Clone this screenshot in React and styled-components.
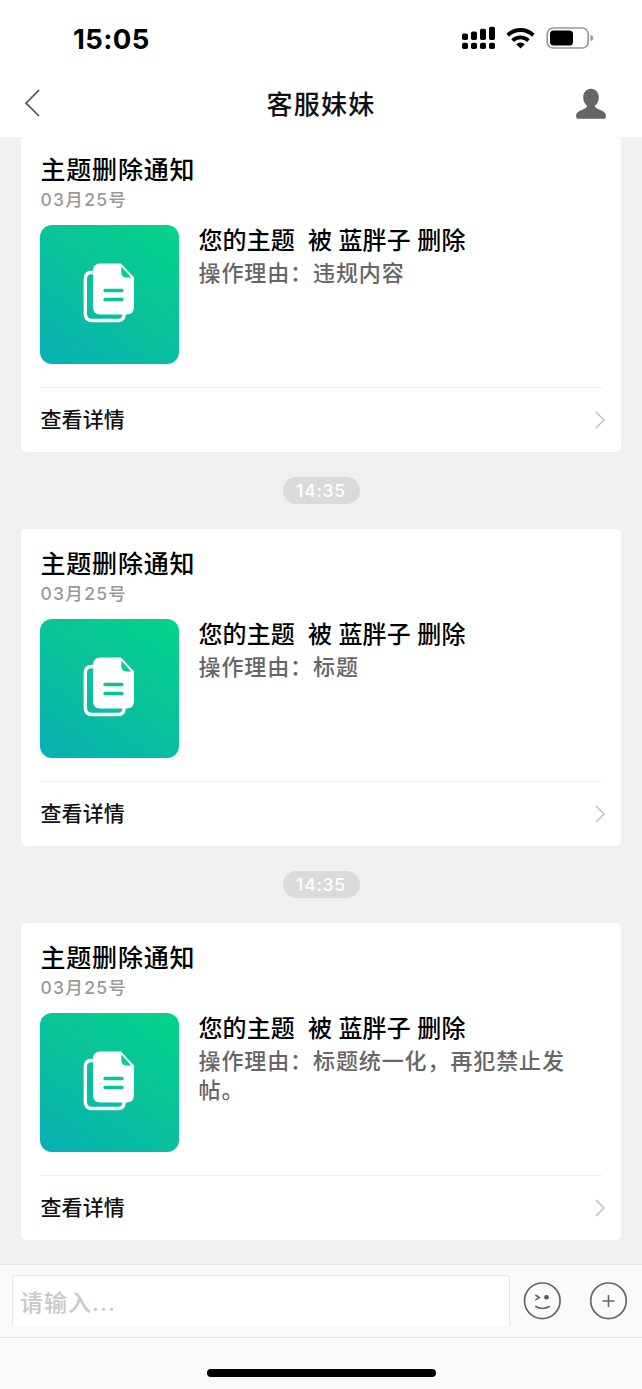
import React from "react"
import styled, { createGlobalStyle } from "styled-components"

const colors = {
  page: "#f0f0f0",
  bar: "#fafafa",
  line: "#e6e6e6",
  text: "#111",
  muted: "#999",
  icon: "#666",
}

const GlobalStyle = createGlobalStyle`
  * {
    box-sizing: border-box;
  }
  body {
    margin: 0;
    background-color: ${colors.page};
    color: ${colors.text};
    font-family: Inter, "Noto Sans CJK SC", sans-serif;
  }
`

const Screen = styled.div`
  display: flex;
  flex-direction: column;
  width: 642px;
  height: 1389px;
  overflow: hidden;
`

const Top = styled.header`
  flex: none;
  height: 137px;
  background-color: #fff;
  z-index: 1;
`

const StatusBar = styled.div`
  display: flex;
  align-items: center;
  justify-content: space-between;
  height: 76px;
  padding: 0 48px 0 73px;
`

const Clock = styled.span`
  font-size: 27.5px;
  font-weight: 700;
  letter-spacing: 0.4px;
  line-height: 32px;
  padding-top: 1px;
  color: #000;
`

const StatusIcons = styled.svg`
  display: block;
  width: 134px;
  height: 28px;
`

const NavBar = styled.div`
  display: grid;
  grid-template-columns: 60px 1fr 60px;
  align-items: center;
  height: 55px;
  padding: 0 22px;

  svg {
    display: block;
  }
  svg:last-child {
    justify-self: end;
    margin-right: 13px;
  }
`

const NavTitle = styled.h1`
  margin: 0;
  padding-top: 2px;
  text-align: center;
  font-size: 26px;
  font-weight: 500;
  letter-spacing: 1.3px;
  line-height: 36px;
`

const Messages = styled.main`
  flex: 1;
  display: flex;
  flex-direction: column;
  align-items: center;
  min-height: 0;
  margin-top: -2px;
`

const Card = styled.article`
  flex: none;
  width: 600px;
  height: 317px;
  padding: 17px 19px 0 18.5px;
  border-radius: 5px;
  background-color: #fff;
`

const CardTitle = styled.h2`
  margin: 0 0 0 1px;
  font-size: 25px;
  font-weight: 500;
  letter-spacing: 0.8px;
  line-height: 36px;
  color: #000;
`

const CardDate = styled.time`
  display: block;
  margin-left: 1px;
  font-size: 17.5px;
  font-weight: 500;
  letter-spacing: 1.3px;
  line-height: 24px;
  color: ${colors.muted};
`

const CardBody = styled.div`
  display: flex;
  height: 175px;
  padding-top: 12.5px;
`

const Thumb = styled.div`
  display: flex;
  flex: none;
  align-items: center;
  justify-content: center;
  width: 139.5px;
  height: 139.5px;
  margin-right: 19.5px;
  padding-bottom: 3px;
  border-radius: 12px;
  background-image: linear-gradient(35deg, #08b0b4 0%, #09c19b 50%, #06d389 100%);
`

const CardText = styled.div`
  flex: 1;
  min-width: 0;
`

const Summary = styled.p`
  margin: 0;
  font-size: 24px;
  font-weight: 500;
  letter-spacing: 0.1px;
  line-height: 32px;
  white-space: pre;
  color: #000;
`

const Reason = styled.p`
  margin: 2px 0 0;
  font-size: 22px;
  font-weight: 500;
  letter-spacing: 0.9px;
  line-height: 29px;
  color: ${colors.icon};
`

const Details = styled.div`
  display: flex;
  align-items: center;
  justify-content: space-between;
  height: 65px;
  padding-left: 1px;
  border-top: 1px solid #f0f0f0;
  font-size: 21px;
  font-weight: 500;
  letter-spacing: 0.1px;
  line-height: 30px;

  span {
    padding-bottom: 1px;
  }
  svg {
    margin-right: -4px;
  }
`

const TimeBadge = styled.div`
  flex: none;
  width: 77px;
  height: 27px;
  margin: 25px 0;
  border-radius: 14px;
  background-color: #dadada;
  color: #fff;
  font-size: 17.5px;
  font-weight: 500;
  letter-spacing: 0.8px;
  line-height: 27px;
  text-align: center;
`

const Composer = styled.footer`
  flex: none;
  display: flex;
  align-items: center;
  height: 74px;
  padding: 0 14px 0 12px;
  border-top: 1px solid ${colors.line};
  border-bottom: 1px solid ${colors.line};
  background-color: ${colors.bar};

  svg {
    display: block;
    flex: none;
  }
`

const Input = styled.input`
  width: 498px;
  height: 52px;
  margin-right: 13px;
  padding: 3px 7px 0;
  border: 1px solid ${colors.line};
  border-bottom-color: #fbfbfb;
  border-radius: 4px 4px 0 0;
  background-color: #fff;
  font-family: inherit;
  font-size: 23px;
  font-weight: 500;
  letter-spacing: 1px;
  outline: none;

  &::placeholder {
    color: #c8c8c8;
    opacity: 1;
  }
`

const IconGap = styled.span`
  flex: 1;
`

const HomeArea = styled.div`
  flex: none;
  height: 51px;
  padding-top: 31px;
  background-color: ${colors.bar};
`

const HomeBar = styled.div`
  width: 229px;
  height: 8px;
  margin: 0 auto;
  border-radius: 4px;
  background-color: #000;
`

const StatusGlyphs = () => (
  <StatusIcons viewBox="460 24 134 28">
    <rect x="462" y="33.5" width="6" height="6.5" rx="1.8" />
    <rect x="471" y="31.5" width="6" height="8.5" rx="1.8" />
    <rect x="480" y="28.8" width="6" height="11.2" rx="1.8" />
    <rect x="489" y="26.8" width="6" height="13.2" rx="1.8" />
    {[462, 471, 480, 489].map(x => (
      <rect key={x} x={x} y="42.8" width="6" height="6.3" rx="1.8" />
    ))}
    <g fill="none" stroke="#000">
      <path d="M507.7 35.3A18.3 18.3 0 0 1 533.3 35.3" strokeWidth="4" />
      <path d="M512.6 40.6A11.3 11.3 0 0 1 528.4 40.6" strokeWidth="3.8" />
    </g>
    <path d="M520.5 48.5l-4.3-4.3a6.3 6.3 0 0 1 8.6 0z" />
    <rect
      x="547.2"
      y="28"
      width="41"
      height="20"
      rx="6"
      fill="none"
      stroke="#999"
      strokeWidth="1.7"
    />
    <rect x="550" y="30.5" width="23" height="15" rx="3.5" />
    <path d="M590.5 34.8q2.8 1 2.8 3.2t-2.8 3.2z" fill="#999" />
  </StatusIcons>
)

const BackIcon = () => (
  <svg width="20" height="30" viewBox="0 0 20 30">
    <path d="M17 1.2L4 14.2l13 12.8" fill="none" stroke="#555" strokeWidth="1.7" />
  </svg>
)

const UserIcon = () => (
  <svg width="32" height="32" viewBox="0 0 32 32" fill="#666">
    <path d="M16 .8c4.8 0 7.8 3.500 7.800 8.600 0 3.900-1.700 6.500-3.700 8.100 0 1.800.6 2.500 3 3.500 4.300 1.700 7.900 3.400 7.900 7 0 2-1 2.800-2.800 2.800H3.800C2 30.800 1 30 1 28c0-3.600 3.600-5.300 7.900-7 2.400-1 3-1.700 3-3.500-2-1.600-3.700-4.200-3.700-8.100C8.200 4.300 11.200.8 16 .8z" />
  </svg>
)

const DocumentsIcon = () => (
  <svg width="52" height="60" viewBox="0 0 52 60">
    <path
      d="M11 9.500H8.500Q2.300 9.500 2.300 15.700v35q0 6.800 6.800 6.800h26q6 0 6-6.500"
      fill="none"
      stroke="#fff"
      strokeWidth="3.4"
    />
    <path d="M17.500 .5H38l13 14V44q0 7.500-7.500 7.500h-26Q10 51.500 10 44V8Q10 .5 17.500 .5z" fill="#fff" />
    <path d="M38.300 3.500v5.500q0 5.500 5.500 5.500h4.400z" fill="#08ca92" />
    <path
      d="M22 27.500h17M22 36.500h17"
      stroke="#09c49a"
      strokeWidth="3.4"
      strokeLinecap="round"
    />
  </svg>
)

const ArrowIcon = () => (
  <svg width="12" height="20" viewBox="0 0 12 20">
    <path d="M2 2l8 8-8 8" fill="none" stroke="#bbb" strokeWidth="1.3" />
  </svg>
)

const SmileIcon = () => (
  <svg width="38" height="38" viewBox="0 0 38 38" fill="none" stroke="#666">
    <circle cx="19.3" cy="18.8" r="17.8" strokeWidth="1.7" />
    <path d="M12.300 13l4 2.600-4 2.600" strokeWidth="1.6" />
    <circle cx="23.5" cy="15.2" r="2.3" fill="#555" stroke="none" />
    <path d="M12.300 24.200q7 4.600 14.400 0" strokeWidth="1.7" />
  </svg>
)

const PlusIcon = () => (
  <svg width="38" height="38" viewBox="0 0 38 38" fill="none" stroke="#666">
    <circle cx="18.5" cy="18.8" r="17.8" strokeWidth="1.7" />
    <path d="M12.500 19h12M18.500 13v12" strokeWidth="1.6" />
  </svg>
)

const notices = [
  { id: 1, reason: "违规内容" },
  { id: 2, time: "14:35", reason: "标题" },
  { id: 3, time: "14:35", reason: "标题统一化，再犯禁止发帖。" },
]

const Notice = ({ time, reason }) => (
  <>
    {time && <TimeBadge>{time}</TimeBadge>}
    <Card>
      <CardTitle>主题删除通知</CardTitle>
      <CardDate>03月25号</CardDate>
      <CardBody>
        <Thumb>
          <DocumentsIcon />
        </Thumb>
        <CardText>
          <Summary>{"您的主题  被 蓝胖子 删除"}</Summary>
          <Reason>{`操作理由：${reason}`}</Reason>
        </CardText>
      </CardBody>
      <Details>
        <span>查看详情</span>
        <ArrowIcon />
      </Details>
    </Card>
  </>
)

export default function App() {
  return (
    <>
      <GlobalStyle />
      <Screen lang="zh-CN">
        <Top>
          <StatusBar>
            <Clock>15:05</Clock>
            <StatusGlyphs />
          </StatusBar>
          <NavBar>
            <BackIcon />
            <NavTitle>客服妹妹</NavTitle>
            <UserIcon />
          </NavBar>
        </Top>
        <Messages>
          {notices.map(notice => (
            <Notice key={notice.id} {...notice} />
          ))}
        </Messages>
        <Composer>
          <Input type="text" placeholder="请输入..." />
          <SmileIcon />
          <IconGap />
          <PlusIcon />
        </Composer>
        <HomeArea>
          <HomeBar />
        </HomeArea>
      </Screen>
    </>
  )
}
